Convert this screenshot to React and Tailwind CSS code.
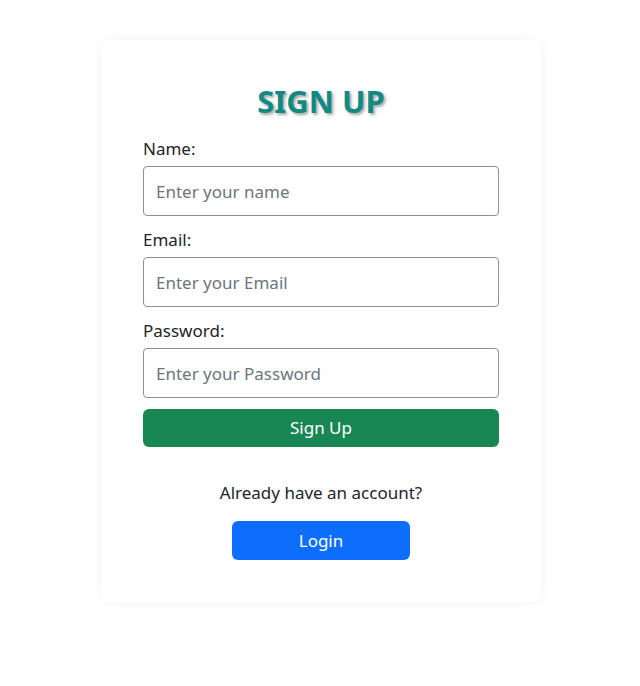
import React from "react";

export default function App() {
  const font = { fontFamily: '"Noto Sans", "Open Sans", sans-serif' };
  return (
    <div className="min-h-screen bg-white pt-10" style={font}>
      <div className="ml-[101px] w-[440px] rounded-lg bg-white px-[42px] pt-[42px] pb-[42px] shadow-[0_0_12px_rgba(0,0,0,0.06)]">
        <h2 className="mb-[15px] text-center text-[31px] font-bold leading-[38px] text-[#128a84] [text-shadow:2px_2px_3px_rgba(0,0,0,0.35)]">
          SIGN UP
        </h2>
        <form onSubmit={(e) => e.preventDefault()}>
          <label className="mb-1 block text-[17px] leading-[27px] text-[#212529]">Name:</label>
          <input
            type="text"
            placeholder="Enter your name"
            className="mb-2.5 block h-[50px] w-full rounded-[4px] border border-[#8f8f8f] px-3 text-[17px] text-[#212529] placeholder:text-[#6c757d] outline-none"
          />
          <label className="mb-1 block text-[17px] leading-[27px] text-[#212529]">Email:</label>
          <input
            type="email"
            placeholder="Enter your Email"
            className="mb-2.5 block h-[50px] w-full rounded-[4px] border border-[#8f8f8f] px-3 text-[17px] text-[#212529] placeholder:text-[#6c757d] outline-none"
          />
          <label className="mb-1 block text-[17px] leading-[27px] text-[#212529]">Password:</label>
          <input
            type="password"
            placeholder="Enter your Password"
            className="block h-[50px] w-full rounded-[4px] border border-[#8f8f8f] px-3 text-[17px] text-[#212529] placeholder:text-[#6c757d] outline-none"
          />
          <button
            type="submit"
            className="mt-[11px] block h-[38px] w-full rounded-md bg-[#198754] text-[17px] text-white"
          >
            Sign Up
          </button>
        </form>
        <p className="mt-[32px] text-center text-[17px] leading-[27px] text-[#212529]">
          Already have an account?
        </p>
        <div className="mt-[15px] flex justify-center">
          <button className="h-[39px] w-[178px] rounded-md bg-[#0d6efd] text-[17px] text-white">
            Login
          </button>
        </div>
      </div>
    </div>
  );
}
